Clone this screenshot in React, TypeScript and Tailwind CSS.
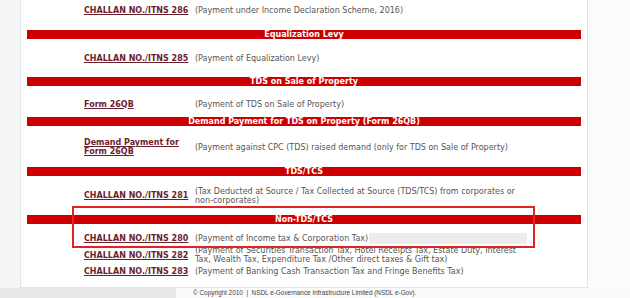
import React from "react";

const linkCls =
  "font-bold underline text-[#6b1e2e] decoration-[#6b1e2e]";
const descCls = "text-[#555555] text-[8px] leading-[9px]";

function Bar({ title }: { title: string }) {
  return (
    <div className="mx-[6px] h-[9px] bg-[#cc0000] flex items-center justify-center overflow-visible">
      <span className="text-white font-bold text-[8px] leading-[9px]">{title}</span>
    </div>
  );
}

function Row({
  h,
  link,
  desc,
  extra,
}: {
  h: string;
  link: React.ReactNode;
  desc: React.ReactNode;
  extra?: React.ReactNode;
}) {
  return (
    <div className={`flex items-center ${h}`}>
      <div className="w-[174px] pl-[63px] shrink-0 text-[8px] leading-[9px]">
        <span className={linkCls}>{link}</span>
      </div>
      <div className="flex items-center">
        <div className={descCls}>{desc}</div>
        {extra}
      </div>
    </div>
  );
}

export default function App() {
  return (
    <div
      className="w-[630px] h-[298px] overflow-hidden bg-[#fafafa] flex flex-col"
      style={{ fontFamily: '"DejaVu Sans", Verdana, sans-serif' }}
    >
      <div className="flex h-[288px] shrink-0">
        <div className="w-[20px] bg-[#f5f5f5] shrink-0" />
        <div className="w-[568px] shrink-0 bg-white border-x border-b border-[#e4e4e4] relative">
          <Row
            h="h-[30px] !items-start pt-[6px]"
            link="CHALLAN NO./ITNS 286"
            desc="(Payment under Income Declaration Scheme, 2016)"
          />
          <Bar title="Equalization Levy" />
          <Row h="h-[38px]" link="CHALLAN NO./ITNS 285" desc="(Payment of Equalization Levy)" />
          <Bar title="TDS on Sale of Property" />
          <Row h="h-[31px] pt-[5px]" link="Form 26QB" desc="(Payment of TDS on Sale of Property)" />
          <Bar title="Demand Payment for TDS on Property (Form 26QB)" />
          <Row
            h="h-[41px] pt-[1px]"
            link={
              <>
                Demand Payment for
                <br />
                Form 26QB
              </>
            }
            desc="(Payment against CPC (TDS) raised demand (only for TDS on Sale of Property)"
          />
          <Bar title="TDS/TCS" />
          <Row
            h="h-[39px]"
            link="CHALLAN NO./ITNS 281"
            desc={
              <>
                (Tax Deducted at Source / Tax Collected at Source (TDS/TCS) from corporates or
                <br />
                non-corporates)
              </>
            }
          />
          <Bar title="Non-TDS/TCS" />
          <div className="h-[5px]" />
          <Row
            h="h-[18px]"
            link="CHALLAN NO./ITNS 280"
            desc="(Payment of Income tax & Corporation Tax)"
            extra={<div className="ml-[1px] w-[158px] h-[11px] bg-[#ececec]" />}
          />
          <Row
            h="h-[16px]"
            link="CHALLAN NO./ITNS 282"
            desc={
              <>
                (Payment of Securities Transaction Tax, Hotel Receipts Tax, Estate Duty, Interest
                <br />
                Tax, Wealth Tax, Expenditure Tax /Other direct taxes &amp; Gift tax)
              </>
            }
          />
          <Row
            h="h-[16px]"
            link="CHALLAN NO./ITNS 283"
            desc="(Payment of Banking Cash Transaction Tax and Fringe Benefits Tax)"
          />
          <div className="absolute left-[51px] top-[206px] w-[463px] h-[42px] border-2 border-[#e02424]" />
        </div>
        <div className="flex-1 bg-[#fbfbfb]" />
      </div>
      <div className="flex-1 flex items-center">
        <div className="w-[176px] self-stretch bg-[#e8e8e8] shrink-0" />
        <div
          className="ml-[17px] text-[6.4px] leading-[8px] text-[#444444]"
          style={{ fontFamily: '"Liberation Sans", Arial, sans-serif' }}
        >
          © Copyright 2010 &nbsp;|&nbsp; NSDL e-Governance Infrastructure Limited (NSDL e-Gov).
        </div>
      </div>
    </div>
  );
}
